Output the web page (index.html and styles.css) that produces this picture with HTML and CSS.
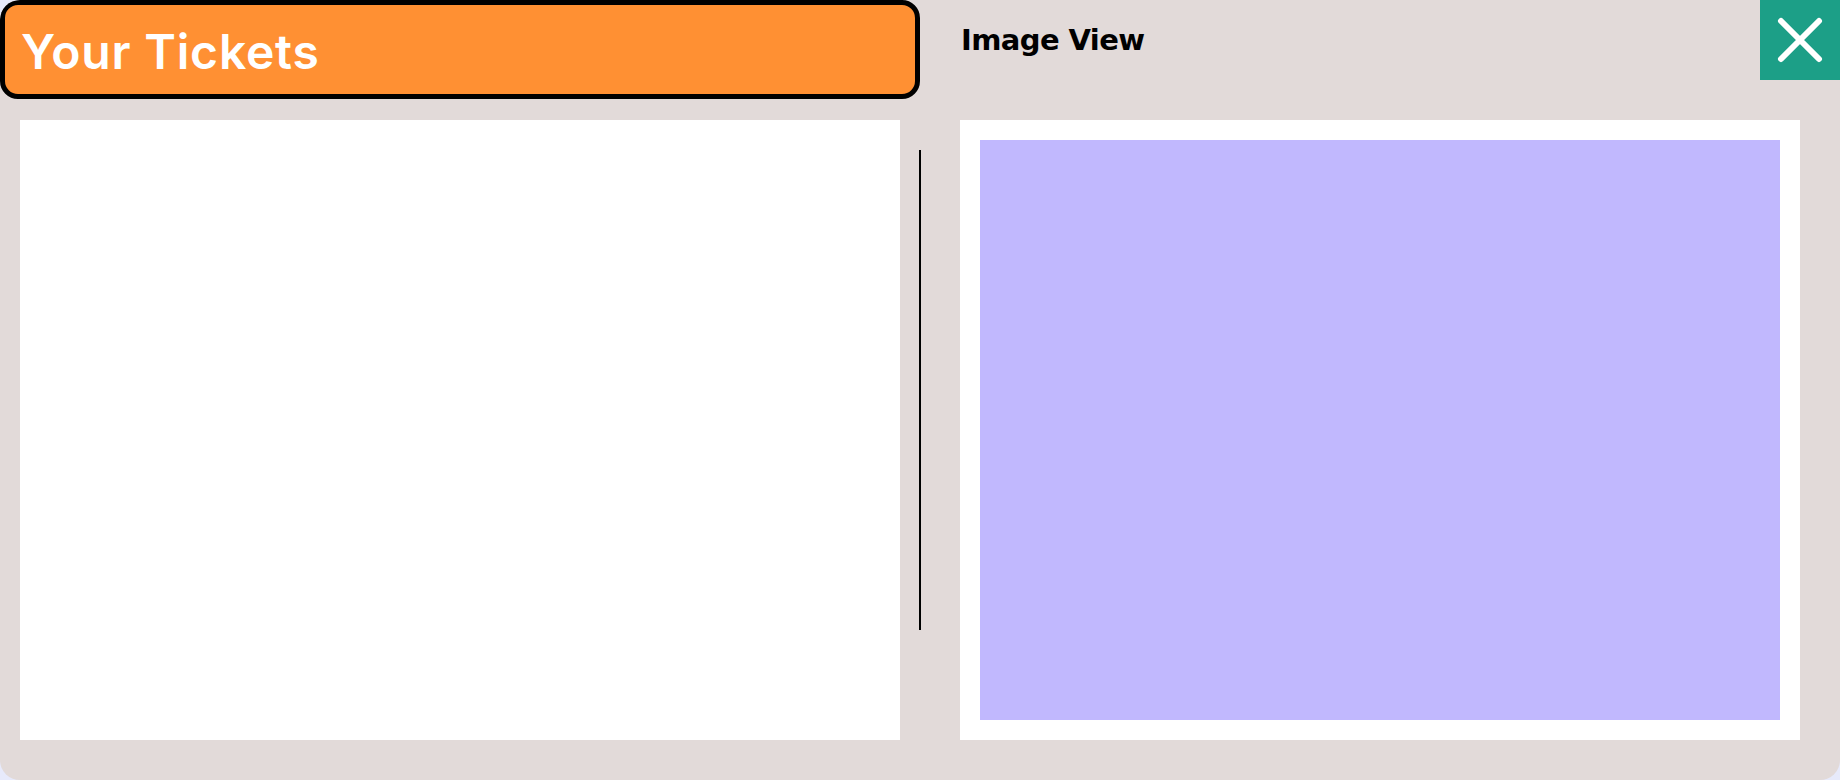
FILE: index.html
```html
<!DOCTYPE html>
<html>
<head>
<meta charset="utf-8">
<link rel="stylesheet" href="styles.css">
</head>
<body>
<div class="app">
  <div class="top">
    <div class="tickets-header">Your Tickets</div>
    <div class="image-title">Image View</div>
    <button class="close-btn" aria-label="Close">
      <svg width="80" height="80" viewBox="0 0 80 80">
        <path d="M21 21 L59 59 M59 21 L21 59" stroke="#fff" stroke-width="6" stroke-linecap="round" fill="none"/>
      </svg>
    </button>
  </div>
  <div class="main">
    <div class="left-panel"></div>
    <div class="divider"><div class="divider-line"></div></div>
    <div class="right-panel"><div class="image-area"></div></div>
  </div>
</div>
</body>
</html>
```

FILE: styles.css
```css
html, body {
  margin: 0;
  padding: 0;
}
body {
  background: #e7eafb;
  width: 1840px;
  height: 780px;
  overflow: hidden;
}
.app {
  width: 1840px;
  height: 780px;
  background: #e2dad9;
  border-radius: 20px 0 20px 20px;
  overflow: hidden;
  display: flex;
  flex-direction: column;
}
.top {
  display: flex;
  align-items: flex-start;
  height: 100px;
  flex: none;
}
.tickets-header {
  width: 920px;
  height: 99px;
  box-sizing: border-box;
  border: 5px solid #000;
  border-radius: 18px;
  background: #ff9033;
  color: #fff;
  font-family: Inter, "Noto Sans", sans-serif;
  font-weight: 600;
  font-size: 48px;
  letter-spacing: 0.8px;
  padding-left: 16px;
  padding-top: 3px;
  display: flex;
  align-items: center;
  flex: none;
}
.image-title {
  margin-left: 41px;
  padding-top: 23px;
  font-family: "DejaVu Sans", sans-serif;
  font-weight: bold;
  font-size: 29px;
  letter-spacing: -0.6px;
  color: #000;
}
.close-btn {
  margin-left: auto;
  width: 80px;
  height: 80px;
  padding: 0;
  border: none;
  background: #1c9f87;
  display: block;
  flex: none;
}
.close-btn svg {
  display: block;
}
.main {
  flex: 1;
  display: flex;
  padding: 20px 40px 40px 20px;
}
.left-panel {
  width: 880px;
  background: #fff;
  flex: none;
}
.divider {
  width: 60px;
  flex: none;
  padding-top: 30px;
}
.divider-line {
  margin-left: 19px;
  width: 2px;
  height: 480px;
  background: #000;
}
.right-panel {
  flex: 1;
  background: #fff;
  padding: 20px;
  display: flex;
}
.image-area {
  flex: 1;
  background: #c1b8fe;
}
```
